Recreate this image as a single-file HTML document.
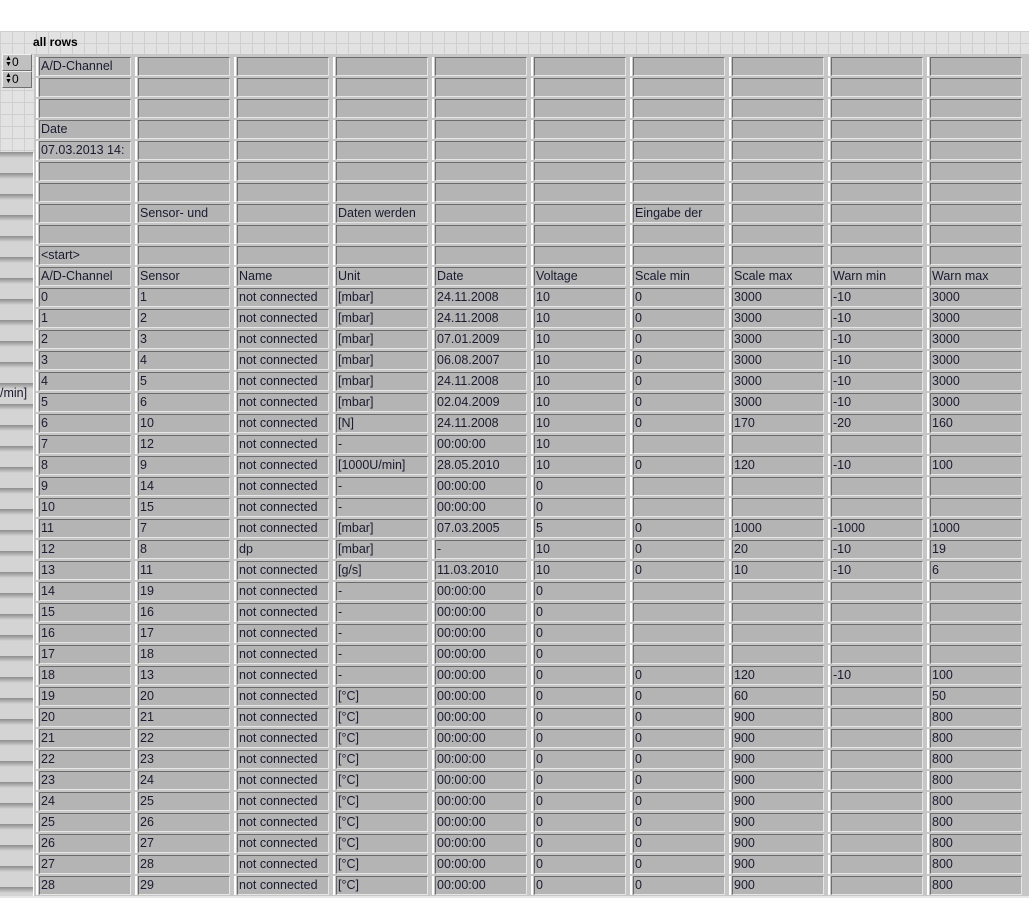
<!DOCTYPE html>
<html><head><meta charset="utf-8"><style>
html,body{margin:0;padding:0;width:1029px;height:898px;overflow:hidden;background:#fff;font-family:"Liberation Sans",sans-serif;}
#grid{position:absolute;left:0;top:31px;width:1029px;height:23px;background-color:#e2e2e2;
background-image:linear-gradient(90deg,#cfcfcf 1px,transparent 1px),linear-gradient(#cfcfcf 1px,transparent 1px);background-size:12px 12px;}
#lgrid{position:absolute;left:0;top:54px;width:34px;height:99px;background-color:#e2e2e2;
background-image:linear-gradient(90deg,#cfcfcf 1px,transparent 1px),linear-gradient(#cfcfcf 1px,transparent 1px);background-size:12px 12px;}
#lstrip{position:absolute;left:0;top:152px;width:33px;height:746px;background:#d4d4d4;
background-image:repeating-linear-gradient(180deg,#8e8e8e 0px,#a4a4a4 2px,#bcbcbc 4px,#d4d4d4 6px,#d4d4d4 21px);}
#title{position:absolute;left:33px;top:35px;font-size:12px;font-weight:bold;color:#000;}
.spin{position:absolute;left:2px;width:28px;height:15px;background:#c0c0c0;border:1px solid;border-color:#f0f0f0 #707070 #707070 #f0f0f0;font-size:12px;line-height:15px;}
.spin b{display:inline-block;width:6px;height:13px;margin:1px 1px 0 2px;vertical-align:top;font-size:7px;line-height:6px;color:#000;font-weight:normal}
#bottom{position:absolute;left:0;top:896px;width:1029px;height:2px;background:#e6e6e6;}
table{position:absolute;left:34px;top:56px;z-index:0;border-collapse:separate;border-spacing:0;table-layout:fixed;background:#c6c6c6;}
td{position:relative;width:92px;height:21px;padding:0 0 0 7px;font-size:12.5px;line-height:21px;color:#1a1a30;white-space:nowrap;overflow:hidden;}
td::before{content:"";position:absolute;left:2px;top:1px;width:2px;height:19px;background:#fff;z-index:-1;}
td::after{content:"";position:absolute;left:5px;top:1px;right:2px;bottom:1px;border:1px solid;border-color:#6c6c6c #e6e6e6 #e6e6e6 #6c6c6c;background:#b4b4b4;z-index:-1;}
#rside{position:absolute;left:1024px;top:54px;width:5px;height:842px;background:#c6c6c6;}
#ttop{position:absolute;left:34px;top:54px;width:995px;height:2px;background:#c6c6c6;}
</style></head><body>
<div id="grid"></div><div id="lgrid"></div><div id="lstrip"></div>
<div id="title">all rows</div>
<div class="spin" style="top:54px"><b>▲<br>▼</b>0</div>
<div class="spin" style="top:71px"><b>▲<br>▼</b>0</div>
<div style="position:absolute;left:0;top:386px;font-size:12.5px;color:#1a1a30;">/min]</div>
<div id="rside"></div><div id="ttop"></div>
<table>
<tr><td>A/D-Channel</td><td></td><td></td><td></td><td></td><td></td><td></td><td></td><td></td><td></td></tr>
<tr><td></td><td></td><td></td><td></td><td></td><td></td><td></td><td></td><td></td><td></td></tr>
<tr><td></td><td></td><td></td><td></td><td></td><td></td><td></td><td></td><td></td><td></td></tr>
<tr><td>Date</td><td></td><td></td><td></td><td></td><td></td><td></td><td></td><td></td><td></td></tr>
<tr><td>07.03.2013 14:</td><td></td><td></td><td></td><td></td><td></td><td></td><td></td><td></td><td></td></tr>
<tr><td></td><td></td><td></td><td></td><td></td><td></td><td></td><td></td><td></td><td></td></tr>
<tr><td></td><td></td><td></td><td></td><td></td><td></td><td></td><td></td><td></td><td></td></tr>
<tr><td></td><td>Sensor- und</td><td></td><td>Daten werden</td><td></td><td></td><td>Eingabe der</td><td></td><td></td><td></td></tr>
<tr><td></td><td></td><td></td><td></td><td></td><td></td><td></td><td></td><td></td><td></td></tr>
<tr><td>&lt;start&gt;</td><td></td><td></td><td></td><td></td><td></td><td></td><td></td><td></td><td></td></tr>
<tr><td>A/D-Channel</td><td>Sensor</td><td>Name</td><td>Unit</td><td>Date</td><td>Voltage</td><td>Scale min</td><td>Scale max</td><td>Warn min</td><td>Warn max</td></tr>
<tr><td>0</td><td>1</td><td>not connected</td><td>[mbar]</td><td>24.11.2008</td><td>10</td><td>0</td><td>3000</td><td>-10</td><td>3000</td></tr>
<tr><td>1</td><td>2</td><td>not connected</td><td>[mbar]</td><td>24.11.2008</td><td>10</td><td>0</td><td>3000</td><td>-10</td><td>3000</td></tr>
<tr><td>2</td><td>3</td><td>not connected</td><td>[mbar]</td><td>07.01.2009</td><td>10</td><td>0</td><td>3000</td><td>-10</td><td>3000</td></tr>
<tr><td>3</td><td>4</td><td>not connected</td><td>[mbar]</td><td>06.08.2007</td><td>10</td><td>0</td><td>3000</td><td>-10</td><td>3000</td></tr>
<tr><td>4</td><td>5</td><td>not connected</td><td>[mbar]</td><td>24.11.2008</td><td>10</td><td>0</td><td>3000</td><td>-10</td><td>3000</td></tr>
<tr><td>5</td><td>6</td><td>not connected</td><td>[mbar]</td><td>02.04.2009</td><td>10</td><td>0</td><td>3000</td><td>-10</td><td>3000</td></tr>
<tr><td>6</td><td>10</td><td>not connected</td><td>[N]</td><td>24.11.2008</td><td>10</td><td>0</td><td>170</td><td>-20</td><td>160</td></tr>
<tr><td>7</td><td>12</td><td>not connected</td><td>-</td><td>00:00:00</td><td>10</td><td></td><td></td><td></td><td></td></tr>
<tr><td>8</td><td>9</td><td>not connected</td><td>[1000U/min]</td><td>28.05.2010</td><td>10</td><td>0</td><td>120</td><td>-10</td><td>100</td></tr>
<tr><td>9</td><td>14</td><td>not connected</td><td>-</td><td>00:00:00</td><td>0</td><td></td><td></td><td></td><td></td></tr>
<tr><td>10</td><td>15</td><td>not connected</td><td>-</td><td>00:00:00</td><td>0</td><td></td><td></td><td></td><td></td></tr>
<tr><td>11</td><td>7</td><td>not connected</td><td>[mbar]</td><td>07.03.2005</td><td>5</td><td>0</td><td>1000</td><td>-1000</td><td>1000</td></tr>
<tr><td>12</td><td>8</td><td>dp</td><td>[mbar]</td><td>-</td><td>10</td><td>0</td><td>20</td><td>-10</td><td>19</td></tr>
<tr><td>13</td><td>11</td><td>not connected</td><td>[g/s]</td><td>11.03.2010</td><td>10</td><td>0</td><td>10</td><td>-10</td><td>6</td></tr>
<tr><td>14</td><td>19</td><td>not connected</td><td>-</td><td>00:00:00</td><td>0</td><td></td><td></td><td></td><td></td></tr>
<tr><td>15</td><td>16</td><td>not connected</td><td>-</td><td>00:00:00</td><td>0</td><td></td><td></td><td></td><td></td></tr>
<tr><td>16</td><td>17</td><td>not connected</td><td>-</td><td>00:00:00</td><td>0</td><td></td><td></td><td></td><td></td></tr>
<tr><td>17</td><td>18</td><td>not connected</td><td>-</td><td>00:00:00</td><td>0</td><td></td><td></td><td></td><td></td></tr>
<tr><td>18</td><td>13</td><td>not connected</td><td>-</td><td>00:00:00</td><td>0</td><td>0</td><td>120</td><td>-10</td><td>100</td></tr>
<tr><td>19</td><td>20</td><td>not connected</td><td>[°C]</td><td>00:00:00</td><td>0</td><td>0</td><td>60</td><td></td><td>50</td></tr>
<tr><td>20</td><td>21</td><td>not connected</td><td>[°C]</td><td>00:00:00</td><td>0</td><td>0</td><td>900</td><td></td><td>800</td></tr>
<tr><td>21</td><td>22</td><td>not connected</td><td>[°C]</td><td>00:00:00</td><td>0</td><td>0</td><td>900</td><td></td><td>800</td></tr>
<tr><td>22</td><td>23</td><td>not connected</td><td>[°C]</td><td>00:00:00</td><td>0</td><td>0</td><td>900</td><td></td><td>800</td></tr>
<tr><td>23</td><td>24</td><td>not connected</td><td>[°C]</td><td>00:00:00</td><td>0</td><td>0</td><td>900</td><td></td><td>800</td></tr>
<tr><td>24</td><td>25</td><td>not connected</td><td>[°C]</td><td>00:00:00</td><td>0</td><td>0</td><td>900</td><td></td><td>800</td></tr>
<tr><td>25</td><td>26</td><td>not connected</td><td>[°C]</td><td>00:00:00</td><td>0</td><td>0</td><td>900</td><td></td><td>800</td></tr>
<tr><td>26</td><td>27</td><td>not connected</td><td>[°C]</td><td>00:00:00</td><td>0</td><td>0</td><td>900</td><td></td><td>800</td></tr>
<tr><td>27</td><td>28</td><td>not connected</td><td>[°C]</td><td>00:00:00</td><td>0</td><td>0</td><td>900</td><td></td><td>800</td></tr>
<tr><td>28</td><td>29</td><td>not connected</td><td>[°C]</td><td>00:00:00</td><td>0</td><td>0</td><td>900</td><td></td><td>800</td></tr>
</table>
<div id="bottom"></div>
</body></html>
